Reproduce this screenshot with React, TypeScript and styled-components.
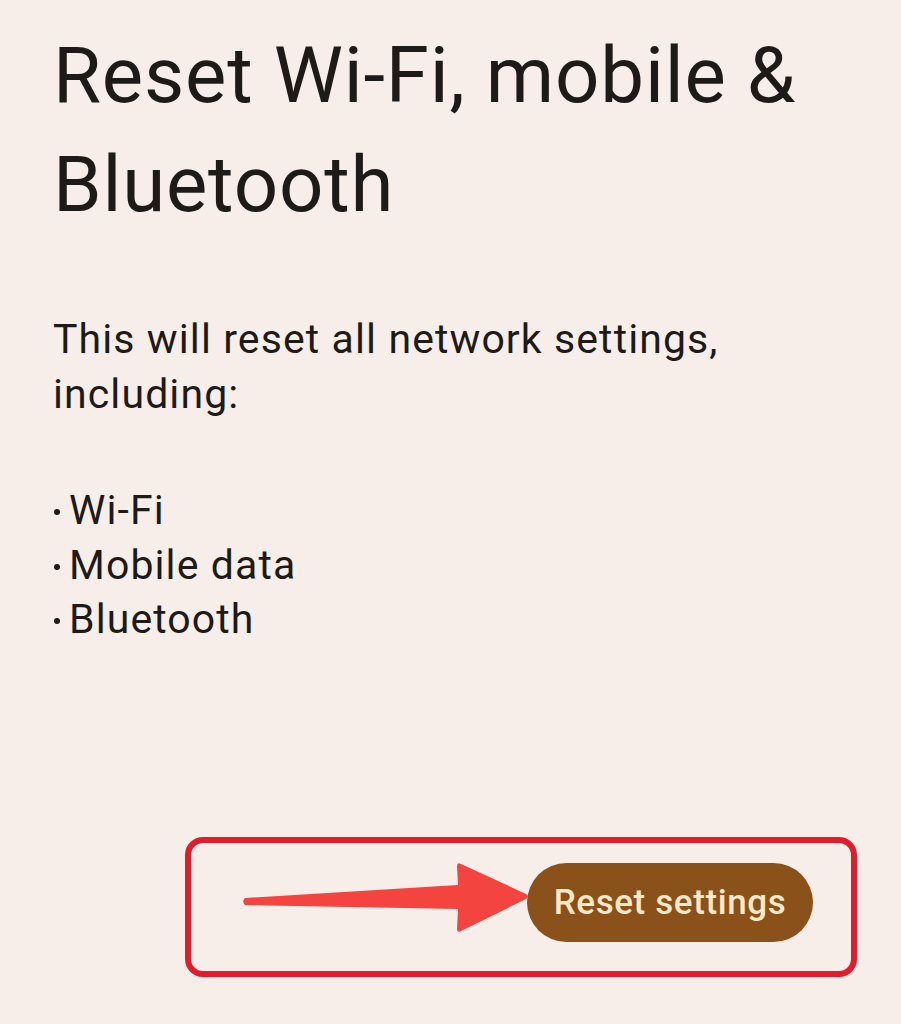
import React from 'react';
import styled, { createGlobalStyle } from 'styled-components';

const GlobalStyle = createGlobalStyle`
  html, body {
    margin: 0;
    padding: 0;
    background: #f8eee9;
  }
  body {
    font-family: Roboto, "Noto Sans", sans-serif;
    color: #1d1a17;
  }
`;

const Screen = styled.div`
  width: 901px;
  height: 1024px;
  box-sizing: border-box;
  padding: 21px 0 0 53px;
  display: flex;
  flex-direction: column;
  overflow: hidden;
`;

const Title = styled.h1`
  margin: 0;
  font-size: 78px;
  font-weight: 400;
  line-height: 109px;
  letter-spacing: 0.8px;
`;

const Body = styled.p`
  margin: 73px 0 0;
  font-size: 41px;
  line-height: 55px;
  letter-spacing: 1.1px;
`;

const List = styled.ul`
  list-style: none;
  margin: 61px 0 0;
  padding: 0;
`;

const Item = styled.li`
  font-size: 41px;
  line-height: 54.5px;
  letter-spacing: 1.1px;
  display: flex;
  align-items: center;
  &::before {
    content: '';
    width: 6px;
    height: 6px;
    border-radius: 50%;
    background: currentColor;
    margin: 4px 9px 0 1px;
  }
`;

const Callout = styled.div`
  margin: 190px 0 0 132px;
  width: 672px;
  height: 140px;
  box-sizing: border-box;
  border: 6px solid #e21c2a;
  border-radius: 18px;
  display: flex;
  align-items: center;
  padding: 0 38px 9px 49px;
`;

const Arrow = styled.svg`
  width: 290px;
  height: 80px;
  flex: none;
  margin-right: -3px;
  position: relative;
  z-index: 1;
`;

const ResetButton = styled.button`
  border: none;
  background: #8a521a;
  color: #fde7c9;
  font-family: Roboto, "Noto Sans", sans-serif;
  font-size: 35px;
  font-weight: 500;
  letter-spacing: 0.6px;
  width: 286px;
  height: 79px;
  padding: 0;
  border-radius: 40px;
  flex: none;
`;

const items = ['Wi-Fi', 'Mobile data', 'Bluetooth'];

const App: React.FC = () => {
  return (
    <Screen>
      <GlobalStyle />
      <Title>
        Reset Wi-Fi, mobile &amp;
        <br />
        Bluetooth
      </Title>
      <Body>
        This will reset all network settings,
        <br />
        including:
      </Body>
      <List>
        {items.map((item) => (
          <Item key={item}>{item}</Item>
        ))}
      </List>
      <Callout>
        {/* tapered pointer leading into the button */}
        <Arrow viewBox="0 0 290 80">
          <path
            d="M5 36 L218 23 L217 4 Q217 0 221 2 L286 32 Q290 34.5 286 37 L221 69 Q217 71 217 67 L218 47 L5 43 Q1.5 39.5 5 36 Z"
            fill="#f4443f"
          />
        </Arrow>
        <ResetButton>Reset settings</ResetButton>
      </Callout>
    </Screen>
  );
};

export default App;
